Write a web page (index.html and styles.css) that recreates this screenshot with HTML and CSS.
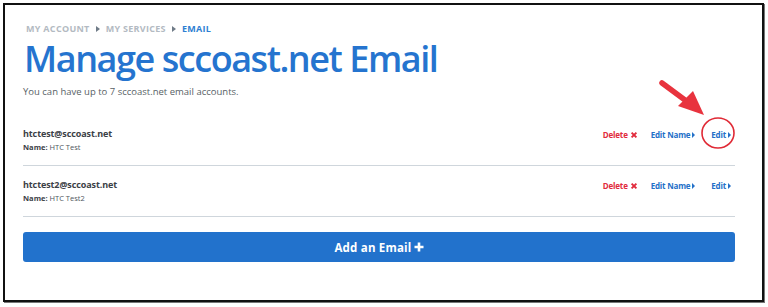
FILE: index.html
```html
<!DOCTYPE html>
<html lang="en">
<head>
<meta charset="utf-8">
<title>Manage sccoast.net Email</title>
<link rel="stylesheet" href="styles.css">
</head>
<body>
<div class="frame">
  <nav class="crumbs">
    <span class="crumb">MY ACCOUNT</span><span class="sep"></span>
    <span class="crumb">MY SERVICES</span><span class="sep"></span>
    <span class="crumb current">EMAIL</span>
  </nav>
  <h1 class="title">Manage sccoast.net Email</h1>
  <p class="lead">You can have up to 7 sccoast.net email accounts.</p>
  <ul class="list">
    <li class="row">
      <div class="info">
        <div class="addr">htctest@sccoast.net</div>
        <div class="name"><b>Name:</b> HTC Test</div>
      </div>
      <div class="actions">
        <a class="act del">Delete<svg class="x" viewBox="0 0 10 10"><path d="M2 2L8 8M8 2L2 8"/></svg></a>
        <a class="act more">Edit Name</a>
        <a class="act more edit">Edit</a>
      </div>
    </li>
    <li class="row">
      <div class="info">
        <div class="addr">htctest2@sccoast.net</div>
        <div class="name"><b>Name:</b> HTC Test2</div>
      </div>
      <div class="actions">
        <a class="act del">Delete<svg class="x" viewBox="0 0 10 10"><path d="M2 2L8 8M8 2L2 8"/></svg></a>
        <a class="act more">Edit Name</a>
        <a class="act more edit">Edit</a>
      </div>
    </li>
  </ul>
  <button class="add">Add an Email<svg class="plus" viewBox="0 0 10 10"><path d="M5 0.5V9.5M0.5 5H9.5"/></svg></button>
  <svg class="annot" viewBox="0 0 768 307" width="768" height="307">
    <line x1="662" y1="83" x2="689" y2="103" class="shaft"/>
    <polygon points="704,115 678,106 693,91" class="head"/>
    <ellipse cx="718" cy="133" rx="16" ry="15" class="ring"/>
  </svg>
</div>
</body>
</html>
```

FILE: styles.css
```css
html, body {
  margin: 0;
  padding: 0;
  background: #fff;
}
body {
  font-family: "Open Sans", "Liberation Sans", sans-serif;
  width: 768px;
  height: 307px;
  overflow: hidden;
}
.frame {
  margin: 3px;
  width: 761px;
  height: 299px;
  box-sizing: border-box;
  border: 2px solid #111;
  box-shadow: 1px 1px 0 #777;
  padding: 18px 27px 0 18px;
}
.crumbs {
  display: flex;
  align-items: center;
  height: 11px;
  font-size: 9px;
  line-height: 11px;
  font-weight: 700;
  letter-spacing: 0.3px;
  color: #b3bac2;
}
.crumb.current { color: #2e7fd2; }
.sep {
  width: 0;
  height: 0;
  border-left: 4px solid #6f7b87;
  border-top: 3px solid transparent;
  border-bottom: 3px solid transparent;
  margin: 0 6px;
}
.crumbs .crumb:first-child { margin-left: 3px; }
.title {
  margin: 0 0 0 1px;
  font-size: 36px;
  line-height: 49px;
  font-weight: 600;
  letter-spacing: -1.45px;
  color: #2574cf;
}
.lead {
  margin: 2px 0 0;
  font-size: 9.5px;
  line-height: 13px;
  color: #585f66;
}
.list {
  list-style: none;
  margin: 17px 0 0;
  padding: 0;
}
.row {
  display: flex;
  justify-content: space-between;
  align-items: flex-start;
  padding: 12px 0 11px;
  border-bottom: 1px solid #cfd6dc;
}
.addr {
  font-size: 9px;
  line-height: 14px;
  font-weight: 700;
  letter-spacing: -0.1px;
  color: #3b4046;
}
.name {
  font-size: 7.5px;
  line-height: 13px;
  color: #50575e;
}
.name b { color: #3b4046; }
.actions {
  display: flex;
  align-items: center;
  gap: 13px;
  margin-top: 2px;
  padding-right: 4px;
  font-size: 8px;
  font-weight: 700;
  line-height: 12px;
  letter-spacing: -0.2px;
}
.act {
  display: flex;
  align-items: center;
  color: #2470c8;
  text-decoration: none;
}
.act.edit { margin-left: 3px; }
.del { color: #e12b3c; }
.x {
  width: 8px;
  height: 8px;
  margin-left: 2px;
  fill: none;
  stroke: #e12b3c;
  stroke-width: 2.4;
}
.more::after {
  content: "";
  width: 0;
  height: 0;
  margin-left: 2px;
  border-left: 3px solid #2470c8;
  border-top: 3px solid transparent;
  border-bottom: 3px solid transparent;
}
.add {
  display: flex;
  align-items: center;
  justify-content: center;
  width: 100%;
  height: 30px;
  margin-top: 15px;
  border: 0;
  border-radius: 3px;
  background: #2272cc;
  color: #fff;
  font-family: "Open Sans", "Liberation Sans", sans-serif;
  font-size: 11.5px;
  font-weight: 700;
  letter-spacing: 0.2px;
  padding: 0;
}
.plus {
  width: 10px;
  height: 10px;
  margin-left: 2px;
  fill: none;
  stroke: #fff;
  stroke-width: 2.6;
}
.annot {
  position: absolute;
  left: 0;
  top: 0;
  pointer-events: none;
}
.shaft {
  stroke: #e8333e;
  stroke-width: 5.5;
  stroke-linecap: round;
}
.head { fill: #e8333e; }
.ring {
  fill: none;
  stroke: #e02a36;
  stroke-width: 1.6;
}
```
